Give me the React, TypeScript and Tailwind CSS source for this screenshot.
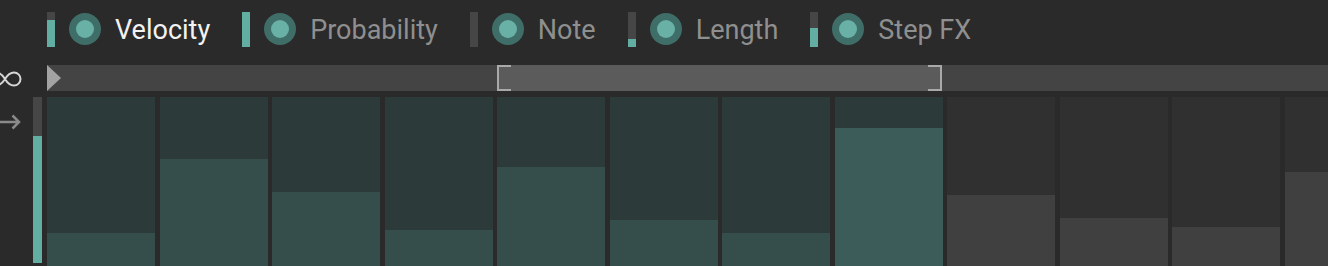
import React from "react";

type Lane = { name: string; level: number; active?: boolean };

// meter level = teal part of the 35px bar
const lanes: Lane[] = [
  { name: "Velocity", level: 27, active: true },
  { name: "Probability", level: 35 },
  { name: "Note", level: 0 },
  { name: "Length", level: 8 },
  { name: "Step FX", level: 19 },
];

// fill heights of the step bars (px), first 8 steps are inside the loop
const steps = [33, 107, 74, 36, 99, 46, 33, 138, 71, 48, 39, 94];

function Meter({ level }: { level: number }) {
  return (
    <div className="flex h-[35px] w-[8px] flex-col justify-end bg-[#464646]">
      <div className="w-full bg-[#63aea3]" style={{ height: level }} />
    </div>
  );
}

function Knob() {
  return (
    <div className="flex h-[32px] w-[32px] items-center justify-center rounded-full bg-[#3f6d67]">
      <div className="h-[18px] w-[18px] rounded-full bg-[#69b1a6]" />
    </div>
  );
}

export default function App() {
  return (
    <div
      className="h-[266px] w-[1328px] overflow-hidden bg-[#2a2a2a]"
      style={{ fontFamily: "Roboto, 'Noto Sans', sans-serif" }}
    >
      {/* lane tabs */}
      <div className="flex h-[59px] items-center gap-[32px] pl-[47px] pb-[1px]">
        {lanes.map((l) => (
          <div key={l.name} className="flex items-center">
            <Meter level={l.level} />
            <div className="ml-[14px]">
              <Knob />
            </div>
            <span
              className={`ml-[14px] mt-[2px] text-[27px] leading-none ${
                l.active ? "text-[#f2f2f2]" : "text-[#8f8f8f]"
              }`}
            >
              {l.name}
            </span>
          </div>
        ))}
      </div>

      {/* loop bar */}
      <div className="mt-[6px] flex h-[26px]">
        <div className="flex w-[47px] shrink-0 items-center">
          <svg width="22" height="18" viewBox="0 0 22 18" className="mt-[2px]">
            <path
              d="M5 9 C8 4 11 2.5 14 2.5 A6.5 6.5 0 0 1 14 15.5 C11 15.5 8 14 5 9 C2 4 -1 2.5 -4 2.5 A6.5 6.5 0 0 0 -4 15.5 C-1 15.5 2 14 5 9 Z"
              fill="none"
              stroke="#d6d6d6"
              strokeWidth="2"
            />
          </svg>
        </div>
        <div className="flex flex-1 bg-[#444444]">
          <svg width="14" height="26" viewBox="0 0 14 26">
            <polygon points="0,0 14,13 0,26" fill="#a3a3a3" />
          </svg>
          <div className="ml-[436px] flex w-[445px] justify-between bg-[#5b5b5b]">
            <div className="h-full w-[14px] border-y-2 border-l-2 border-[#a9a9a9]" />
            <div className="h-full w-[14px] border-y-2 border-r-2 border-[#a9a9a9]" />
          </div>
        </div>
      </div>

      {/* steps */}
      <div className="mt-[6px] flex h-[169px]">
        <div className="relative w-[47px] shrink-0">
          <svg width="22" height="16" viewBox="0 0 22 16" className="absolute left-0 top-[17px]">
            <path d="M-2 8 H19 M12.5 1.5 L19 8 L12.5 14.5" fill="none" stroke="#8a8a8a" strokeWidth="2.5" />
          </svg>
          <div className="absolute left-[33px] top-0 flex h-[166px] w-[9px] flex-col bg-[#464646]">
            <div className="mt-[39px] flex-1 bg-[#63aea3]" />
          </div>
        </div>
        <div className="flex gap-[4.5px]">
          {steps.map((h, i) => {
            const inLoop = i < 8;
            const sel = i === 7;
            return (
              <div
                key={i}
                className={`flex h-full w-[108px] shrink-0 flex-col justify-end ${
                  inLoop ? "bg-[#2d3a3a]" : "bg-[#303030]"
                }`}
              >
                <div
                  className={
                    sel ? "bg-[#3b5c58]" : inLoop ? "bg-[#354e4b]" : "bg-[#404040]"
                  }
                  style={{ height: h }}
                />
              </div>
            );
          })}
        </div>
      </div>
    </div>
  );
}
